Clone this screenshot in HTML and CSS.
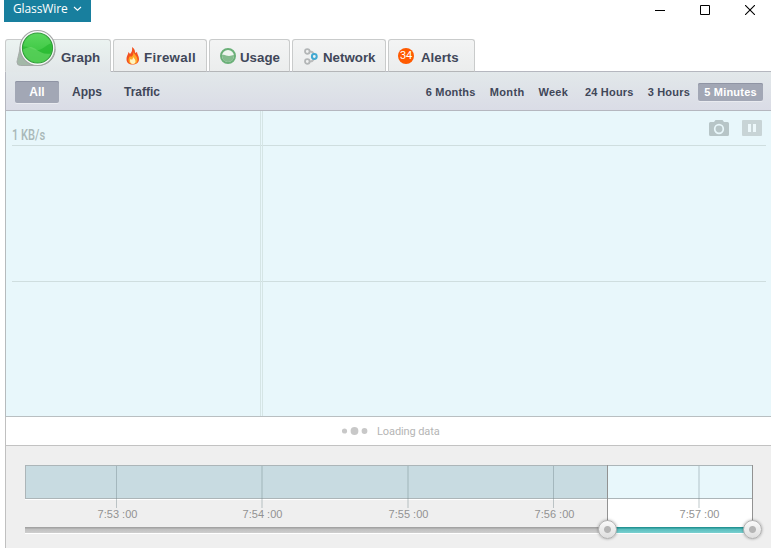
FILE: index.html
```html
<!DOCTYPE html>
<html lang="en">
<head>
  <meta charset="UTF-8" />
  <title>GlassWire</title>
  <link rel="stylesheet" href="styles.css">
</head>
<body>
  <header class="titlebar">
    <button class="app-menu">GlassWire
      <svg width="9" height="6" viewBox="0 0 9 6"><path d="M1 1l3.5 3.2L8 1" fill="none" stroke="#fff" stroke-width="1.1"/></svg>
    </button>
    <div class="window-buttons">
      <svg width="10" height="10"><path d="M0 5.5h10" stroke="#000"/></svg>
      <svg width="10" height="10"><path d="M.5.5h9v9h-9z" fill="none" stroke="#000"/></svg>
      <svg width="10" height="10"><path d="M0 0l10 10M10 0L0 10" stroke="#000" stroke-width="1.1"/></svg>
    </div>
  </header>

  <main class="window">
    <nav class="tabs">
      <div class="tab active">
        <svg class="logo" width="40" height="40" viewBox="0 0 40 40">
          <defs>
            <linearGradient id="green" x1="0" y1="0" x2="0" y2="1">
              <stop offset="0" stop-color="#5bd85e"/>
              <stop offset="1" stop-color="#2dbf35"/>
            </linearGradient>
          </defs>
          <path d="M4.500 17C3 25 1.500 30 1 33q0 3.500 3.500 3.500H21C33 36.500 39 29 39 20Z" fill="#a3b8a8" stroke="#a5aaa8"/>
          <circle cx="21.500" cy="19" r="17.500" fill="#f7f9f8" stroke="#a3a6a5" stroke-width="1.200"/>
          <circle cx="21.500" cy="19" r="15" fill="url(#green)" stroke="#329c3b" stroke-width="1.200"/>
          <path d="M7 17.500c7-1 10 5 16 3.500 6-2 8-6 12.500-6.500C37 24 32 33 21.500 33.500 12 33 6 25 7 17.500Z" fill="#23b72c" opacity=".65"/>
          <path d="M7 20.500c5-3 8-3.500 12-1 5 4 9 6 16 5-3 6-7 9-13.500 9C13 33 8 27 7 20.500Z" fill="#82e37e" opacity=".45"/>
        </svg>
        <span>Graph</span>
      </div>
      <div class="tab firewall">
        <svg width="14" height="18" viewBox="0 0 14 18">
          <path d="M6 0c3 2 3 4 3 6l2-1c0 2 2 4 2 7 0 4-3 5.500-6.500 5.500S.5 16 .5 12C.5 9 2 8 2.500 5L4 7c2-2 2.500-4 2-7Z" fill="#f4511e"/>
          <path d="M7.500 5c1 3 4 4 4 8 0 3-2 4-4.500 4s-4.500-1-4.500-4c0-2 1-3 1.500-4l1 1c2-1 2.500-3 2.500-5Z" fill="#ffa726"/>
          <path d="M7.500 10c.5 2 2 2 2 4.500 0 1.500-1 2.500-2.500 2.500s-3-1-3-3 1-2 1-2l1 1Z" fill="#fff4c2"/>
        </svg>
        <span>Firewall</span>
      </div>
      <div class="tab usage">
        <svg width="16" height="16" viewBox="0 0 16 16">
          <circle cx="8" cy="8" r="7" fill="#eef5ef" stroke="#6ab078" stroke-width="2"/>
          <path d="M2 7c3-1 4 1 7 1 2 0 3-1 5-1 0 4-2 7-6 7s-6-3-6-7Z" fill="#83bb8d"/>
        </svg>
        <span>Usage</span>
      </div>
      <div class="tab network">
        <svg width="14" height="17" viewBox="0 0 14 17">
          <path d="M5.500 3.500h1q2 0 3.500 2.500M5.500 13.500h1q2 0 3.500-2.500" fill="none" stroke="#b9bbbb" stroke-width="2"/>
          <circle cx="3.300" cy="3.500" r="2.300" fill="#f0f1f1" stroke="#b3b6b7" stroke-width="1.800"/>
          <circle cx="3.300" cy="13.500" r="2.300" fill="#f0f1f1" stroke="#b3b6b7" stroke-width="1.800"/>
          <circle cx="10.300" cy="8.500" r="2.400" fill="#f0f1f1" stroke="#42a9d2" stroke-width="2"/>
        </svg>
        <span>Network</span>
      </div>
      <div class="tab alerts">
        <i class="count">34</i>
        <span>Alerts</span>
      </div>
    </nav>

    <div class="toolbar">
      <div class="filters">
        <a class="selected">All</a>
        <a>Apps</a>
        <a>Traffic</a>
      </div>
      <div class="ranges">
        <a>6 Months</a>
        <a>Month</a>
        <a>Week</a>
        <a>24 Hours</a>
        <a>3 Hours</a>
        <a class="selected">5 Minutes</a>
      </div>
    </div>

    <section class="graph">
      <div class="graph-top">
        <span class="scale">1 KB/s</span>
        <div class="graph-tools">
          <svg width="20" height="16" viewBox="0 0 20 16">
            <path d="M1.500 2H5l1.500-2h7L15 2h3.500q1.500 0 1.500 1.500v11q0 1.500-1.500 1.500h-17Q0 16 0 14.500v-11Q0 2 1.500 2Z" fill="#b7c5c7"/>
            <circle cx="10" cy="9" r="4.300" fill="none" stroke="#e8f7fb" stroke-width="1.700"/>
          </svg>
          <svg width="20" height="16" viewBox="0 0 20 16">
            <rect width="20" height="16" rx="1" fill="#c8d4d6"/>
            <path d="M6 4h3v8H6zM11 4h3v8h-3z" fill="#edf8fb"/>
          </svg>
        </div>
      </div>
      <div class="graph-row"></div>
      <div class="minute-line"></div>
    </section>

    <div class="loading">
      <svg width="26" height="8" viewBox="0 0 26 8" fill="#c8c8c8">
        <circle cx="2.500" cy="4" r="2.600"/><circle cx="12.500" cy="4" r="3.900"/><circle cx="22.500" cy="4" r="2.900"/>
      </svg>
      <span>Loading data</span>
    </div>

    <section class="timeline">
      <div class="track">
        <div class="past"></div>
        <div class="current"></div>
        <div class="tick t1"><span>7:53 :00</span></div>
        <div class="tick wide t2"><span>7:54 :00</span></div>
        <div class="tick wide t3"><span>7:55 :00</span></div>
        <div class="tick t4"><span>7:56 :00</span></div>
        <div class="tick wide t5"><span>7:57 :00</span></div>
        <i class="handle start"></i>
        <i class="handle end"></i>
      </div>
    </section>
  </main>
</body>
</html>
```
FILE: styles.css
```css
*,
*::before,
*::after {
  box-sizing: border-box;
}

body {
  margin: 0;
  height: 548px;
  overflow: hidden;
  background: #fff;
  color: #414759;
  font-family: "Liberation Sans", Arial, sans-serif;
}

svg {
  display: block;
  flex: none;
}

/* Title bar */
.titlebar {
  height: 39px;
  display: flex;
  justify-content: space-between;
  align-items: flex-start;
  padding-left: 4px;
}

.app-menu {
  width: 87px;
  height: 22px;
  display: flex;
  align-items: center;
  gap: 5px;
  padding: 0 0 5px 9px;
  border: 0;
  background: #187f9e;
  color: #fff;
  font: 12px "Open Sans", "Noto Sans", sans-serif;
  letter-spacing: -0.1px;
}

.window-buttons {
  display: flex;
  gap: 35px;
  padding: 5px 16px 0 0;
}

/* Main tabs */
.window {
  margin-left: 5px;
}

.tabs {
  position: relative;
  z-index: 1;
  height: 33px;
  display: flex;
  gap: 2px;
}

.tab {
  height: 33px;
  display: flex;
  align-items: center;
  padding-top: 4px;
  border: 1px solid #c9cbcb;
  border-bottom-color: #b4b6b8;
  border-radius: 3px 3px 0 0;
  background: linear-gradient(#f3f4f4, #ebeded);
  font-size: 13.3px;
  font-weight: bold;
}

.tab.active {
  position: relative;
  width: 106px;
  padding-left: 55px;
  border-bottom-color: #e2e7e9;
  background: linear-gradient(#ebf3f1, #e2e7e9);
}

.logo {
  position: absolute;
  left: 10px;
  top: -11px;
}

.tab.firewall {
  width: 94px;
  padding-left: 12px;
  gap: 4px;
  letter-spacing: 0.3px;
}

.tab.usage {
  width: 81px;
  padding-left: 10px;
  gap: 4px;
}

.tab.network {
  width: 94px;
  padding-left: 11px;
  gap: 5px;
}

.tab.alerts {
  width: 87px;
  padding-left: 9px;
  gap: 7px;
}

.tab svg:not(.logo) {
  margin-top: -3px;
}

.count {
  width: 16px;
  height: 16px;
  margin-top: -3px;
  border-radius: 50%;
  background: #ff5a00;
  color: #fff;
  font: 11px/16px Roboto, sans-serif;
  letter-spacing: -0.3px;
  text-align: center;
}

/* Filter and time range bar */
.toolbar {
  height: 40px;
  margin-top: -1px;
  display: flex;
  justify-content: space-between;
  align-items: center;
  padding: 2px 8px 0 9px;
  border: solid #b5b7bf;
  border-width: 1px 0 1px 1px;
  background: linear-gradient(#e2e8ea, #dadce6);
  font-weight: bold;
}

.filters,
.ranges {
  display: flex;
  align-items: center;
}

.filters {
  gap: 13px;
  font-size: 12px;
}

.filters a:nth-child(2) {
  margin-right: 9px;
}

.filters .selected {
  width: 44px;
  height: 22px;
  line-height: 23px;
  text-align: center;
}

.ranges {
  gap: 14px;
  font-size: 11px;
  letter-spacing: 0.2px;
}

.ranges a:nth-child(3) {
  margin-right: 3px;
}

.ranges a:nth-child(2) {
  letter-spacing: 0.4px;
}

.ranges .selected {
  width: 65px;
  height: 18px;
  margin-left: -6px;
  line-height: 19px;
  text-align: center;
}

.selected {
  border-radius: 2px;
  background: #a2a7b5;
  box-shadow: inset 0 1px #8f94a4, 0 1px #e9ebf0;
  color: #fff;
}

/* Traffic graph */
.graph {
  position: relative;
  height: 306px;
  padding: 0 5px 0 6px;
  border-left: 1px solid #b6bbbd;
  border-bottom: 1px solid #b9bfc1;
  background: #e8f7fb;
}

.graph-top {
  height: 35px;
  display: flex;
  justify-content: space-between;
  border-bottom: 1px solid #cfdedf;
}

.scale {
  padding-top: 15px;
  color: #a9b8b8;
  font: 500 15px/18px Roboto, sans-serif;
  transform: scaleX(0.74);
  transform-origin: left;
}

.graph-tools {
  display: flex;
  gap: 13px;
  padding: 9px 4px 0 0;
}

.graph-row {
  height: 136px;
  border-bottom: 1px solid #cfdedf;
}

.minute-line {
  position: absolute;
  left: 254px;
  top: 0;
  width: 3px;
  height: 305px;
  border: solid #d5e5e5;
  border-width: 0 1px;
}

.loading {
  height: 29px;
  display: flex;
  align-items: center;
  gap: 9px;
  padding-left: 336px;
  border-left: 1px solid #c0c0c0;
  border-bottom: 1px solid #c2c2c2;
  background: #fff;
  color: #b5b5b5;
  font: 11px Roboto, sans-serif;
  letter-spacing: -0.1px;
}

/* Timeline with range slider */
.timeline {
  height: 102px;
  padding: 19px 0 0 19px;
  border-left: 1px solid #c0c0c0;
  background: #efefef;
}

.track {
  position: relative;
  width: 728px;
  height: 69px;
  display: flex;
}

.past,
.current {
  height: 69px;
}

.past::before,
.current::before {
  content: "";
  display: block;
  height: 34px;
  border: 1px solid #acb5b8;
}

.past::after,
.current::after {
  content: "";
  display: block;
  height: 7px;
  margin-top: 28px;
  border-bottom: 1px solid #fff;
}

.past {
  width: 582px;
}

.past::before {
  border-right: 0;
  background: #c8dbe1;
  box-shadow: 0 1px #fff;
}

.past::after {
  background: linear-gradient(#a3a3a3 1px, #bfbfbf 2px, #cecece);
}

.current {
  width: 146px;
  border: solid #929292;
  border-width: 0 1px;
  background: #fff;
}

.current::before {
  border-width: 1px 0;
  background: #e8f7fb;
}

.current::after {
  background: linear-gradient(#259494 1px, #57bdbd 2px, #7bd0d0);
}

.tick {
  position: absolute;
  top: 1px;
  width: 1px;
  height: 42px;
  background: rgba(110, 130, 135, 0.4);
}

.tick.wide {
  width: 2px;
  background: rgba(110, 130, 135, 0.22);
}

.t1 { left: 91px; }
.t2 { left: 236px; }
.t3 { left: 382px; }
.t4 { left: 528px; }
.t5 { left: 673px; }

.tick span {
  position: absolute;
  left: -29px;
  top: 42px;
  width: 61px;
  color: #929292;
  font-size: 11px;
  line-height: 13px;
  text-align: center;
}

.handle {
  position: absolute;
  top: 55px;
  width: 19px;
  height: 19px;
  border: 1px solid #b0b0b0;
  border-radius: 50%;
  background: radial-gradient(circle, #b5b5b5 3px, transparent 4px), linear-gradient(#fafafa, #dedede);
  box-shadow: 0 0 3px rgba(0, 0, 0, 0.35);
}

.start { left: 573px; }
.end { left: 718px; }
```
